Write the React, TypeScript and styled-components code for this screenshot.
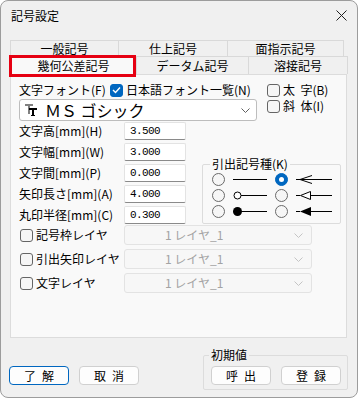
import styled, { createGlobalStyle } from 'styled-components';

const GlobalStyle = createGlobalStyle`
  html, body {
    margin: 0;
    padding: 0;
    background: #ffffff;
  }
  body {
    font-family: 'Noto Sans CJK JP', 'Noto Sans', sans-serif;
    font-size: 12px;
    color: #000;
  }
  * {
    box-sizing: border-box;
  }
`;

const Window = styled.div`
  width: 358px;
  height: 398px;
  border: 1px solid #9c9c9c;
  border-radius: 8px;
  background: #f0f0f0;
  display: flex;
  flex-direction: column;
  overflow: hidden;
`;
const TitleBar = styled.div`
  height: 29px;
  padding: 0 10px 0 10px;
  display: flex;
  align-items: center;
  justify-content: space-between;
  line-height: 12px;
`;
const Tabs = styled.div`
  margin: 10px 0 0 9px;
  display: flex;
  flex-direction: column;
`;
const TabRow = styled.div<{ $h: number }>`
  display: flex;
  height: ${(p) => p.$h}px;
`;
const Tab = styled.div<{ $w: number; $active?: boolean }>`
  width: ${(p) => p.$w}px;
  height: 100%;
  border: 1px solid #d9d9d9;
  border-bottom: none;
  margin-left: -1px;
  background: ${(p) => (p.$active ? '#f9f9f9' : '#f0f0f0')};
  display: flex;
  align-items: center;
  justify-content: center;
  line-height: 12px;
  position: relative;
  &:first-child {
    margin-left: 0;
  }
  ${(p) =>
    p.$active &&
    `
    z-index: 1;
    margin-bottom: -1px;
    height: calc(100% + 1px);
    &::after {
      content: '';
      position: absolute;
      left: -2px;
      top: -2px;
      right: 0;
      bottom: -2px;
      border: 3px solid #e60012;
      pointer-events: none;
    }
  `}
`;
const Panel = styled.div`
  margin-left: 9px;
  width: 337px;
  height: 264px;
  border: 1px solid #dcdcdc;
  background: #f9f9f9;
  padding: 0 0 0 8px;
  display: flex;
  flex-direction: column;
`;
const FontSection = styled.div`
  display: flex;
  margin-top: 7px;
`;
const FontLeft = styled.div`
  width: 238px;
  display: flex;
  flex-direction: column;
`;
const HeaderRow = styled.div`
  height: 16px;
  display: flex;
  align-items: center;
`;
const Label = styled.span<{ $w?: number }>`
  display: inline-block;
  ${(p) => (p.$w ? `width: ${p.$w}px;` : '')}
  line-height: 12px;
  white-space: nowrap;
`;
const FontCombo = styled.div`
  margin-top: 1px;
  height: 22px;
  background: #ffffff;
  border: 1px solid #bdbdbd;
  border-radius: 3px;
  display: flex;
  align-items: center;
  padding: 0 6px 0 5px;
`;
const FontName = styled.span`
  margin-left: 8px;
  font-size: 16px;
  line-height: 20px;
  flex: 1;
`;
const StyleCol = styled.div`
  margin-left: 10px;
  display: flex;
  flex-direction: column;
`;
const CheckRow = styled.div<{ $h?: number }>`
  height: ${(p) => p.$h ?? 16}px;
  display: flex;
  align-items: center;
  gap: 3px;
`;
const Box = styled.span<{ $checked?: boolean }>`
  width: 13px;
  height: 13px;
  border-radius: 3px;
  border: 1px solid ${(p) => (p.$checked ? '#0067c0' : '#656565')};
  background: ${(p) => (p.$checked ? '#0067c0' : '#f6f6f6')};
  display: inline-flex;
  align-items: center;
  justify-content: center;
  flex: none;
`;
const FieldsSection = styled.div`
  display: flex;
  margin-top: 1px;
`;
const FieldCol = styled.div`
  display: flex;
  flex-direction: column;
  gap: 3px;
`;
const FieldRow = styled.div`
  height: 18px;
  display: flex;
  align-items: center;
`;
const NumInput = styled.div`
  width: 62px;
  height: 18px;
  background: #ffffff;
  border: 1px solid #e3e3e3;
  border-bottom-color: #8a8a8a;
  border-radius: 2px;
  padding-left: 5px;
  font-family: 'Liberation Mono', monospace;
  font-size: 11px;
  letter-spacing: -0.6px;
  line-height: 16px;
`;
const GroupBox = styled.fieldset<{ $w: number }>`
  margin: 0;
  width: ${(p) => p.$w}px;
  border: 1px solid #dcdcdc;
  border-radius: 2px;
  min-width: 0;
`;
const Legend = styled.legend`
  padding: 0 2px;
  margin-left: -2px;
  line-height: 12px;
  font-size: 12px;
`;
const LeaderGroup = styled(GroupBox)`
  margin: 36px 0 0 16px;
  padding: 1px 0 1px 9px;
`;
const RadioRow = styled.div`
  height: 16px;
  display: grid;
  grid-template-columns: 13px 34px 13px 36px;
  column-gap: 8px;
  align-items: center;
`;
const Radio = styled.span<{ $on?: boolean }>`
  width: 13px;
  height: 13px;
  border-radius: 50%;
  border: 1px solid ${(p) => (p.$on ? '#0067c0' : '#6a6a6a')};
  background: ${(p) => (p.$on ? '#0067c0' : '#f6f6f6')};
  display: flex;
  align-items: center;
  justify-content: center;
  &::after {
    content: '';
    width: 5px;
    height: 5px;
    border-radius: 50%;
    background: ${(p) => (p.$on ? '#ffffff' : 'transparent')};
  }
`;
const LayerSection = styled.div`
  margin-top: 1px;
  display: flex;
  flex-direction: column;
  gap: 4px;
`;
const LayerRow = styled.div`
  height: 20px;
  display: flex;
  align-items: center;
`;
const LayerCheck = styled.div`
  width: 105px;
  padding-left: 1px;
  display: flex;
  align-items: center;
  gap: 3px;
`;
const LayerCombo = styled.div`
  width: 188px;
  height: 20px;
  border: 1px solid #e3e3e3;
  border-radius: 3px;
  background: #f7f7f7;
  color: #a3a3a3;
  display: flex;
  align-items: center;
  padding: 0 8px 0 40px;
  line-height: 12px;
  justify-content: space-between;
`;
const Footer = styled.div`
  display: flex;
  align-items: flex-start;
  padding: 0 9px 0 8px;
`;
const ButtonGroup = styled.div`
  margin-top: 28px;
  display: flex;
  gap: 10px;
`;
const Button = styled.button<{ $primary?: boolean }>`
  width: 60px;
  height: 19px;
  padding: 0;
  border: 1px solid ${(p) => (p.$primary ? '#0067c0' : '#d0d0d0')};
  border-radius: 4px;
  background: #fdfdfd;
  font-family: 'Noto Sans CJK JP', sans-serif;
  font-size: 12px;
  line-height: 12px;
  letter-spacing: 6px;
  text-indent: 6px;
  color: #000;
`;
const InitGroup = styled(GroupBox)`
  margin: 11px 0 0 auto;
  padding: 5px 5px 4px 7px;
  display: flex;
  gap: 10px;
`;

const Chevron = ({ color = '#5f5f5f' }: { color?: string }) => (
  <svg width="9" height="5" viewBox="0 0 9 5">
    <polyline points="0.5,0.5 4.5,4.5 8.5,0.5" fill="none" stroke={color} strokeWidth="1" />
  </svg>
);

const CheckMark = () => (
  <svg width="9" height="8" viewBox="0 0 9 8">
    <polyline points="1,4 3.5,6.5 8,1.5" fill="none" stroke="#fff" strokeWidth="1.4" />
  </svg>
);

const Checkbox = ({ checked }: { checked?: boolean }) => (
  <Box $checked={checked}>{checked && <CheckMark />}</Box>
);

const TTIcon = () => (
  <svg width="12" height="12" viewBox="0 0 12 12">
    <rect x="0" y="0" width="8" height="2" fill="#808080" />
    <rect x="3" y="0" width="2" height="10" fill="#808080" />
    <rect x="4" y="4" width="8" height="2" fill="#000" />
    <rect x="7" y="4" width="2" height="8" fill="#000" />
    <rect x="6" y="11" width="4" height="1" fill="#000" />
  </svg>
);

const LeaderLine = ({ kind }: { kind: 'plain' | 'open' | 'dot' }) => (
  <svg width="34" height="16" viewBox="0 0 34 16">
    {kind === 'plain' && <line x1="0" y1="8.5" x2="34" y2="8.5" stroke="#000" />}
    {kind === 'open' && (
      <>
        <circle cx="4.5" cy="8.5" r="3.5" fill="#fff" stroke="#000" />
        <line x1="8" y1="8.5" x2="34" y2="8.5" stroke="#000" />
      </>
    )}
    {kind === 'dot' && (
      <>
        <circle cx="4.5" cy="8.5" r="4.5" fill="#000" />
        <line x1="8" y1="8.5" x2="34" y2="8.5" stroke="#000" />
      </>
    )}
  </svg>
);

const ArrowLine = ({ kind }: { kind: 'open' | 'hollow' | 'solid' }) => (
  <svg width="36" height="16" viewBox="0 0 36 16">
    <line x1="0" y1="8.5" x2="4" y2="8.5" stroke="#000" />
    {kind === 'open' && (
      <>
        <line x1="4" y1="8.5" x2="36" y2="8.5" stroke="#000" />
        <polyline points="16,4.5 4,8.5 16,12.5" fill="none" stroke="#000" />
      </>
    )}
    {kind === 'hollow' && (
      <>
        <polygon points="4.5,8.5 14.5,4.5 14.5,12.5" fill="#fff" stroke="#000" />
        <line x1="14.5" y1="8.5" x2="36" y2="8.5" stroke="#000" />
      </>
    )}
    {kind === 'solid' && (
      <>
        <polygon points="4,8.5 15,4 15,13" fill="#000" />
        <line x1="15" y1="8.5" x2="36" y2="8.5" stroke="#000" />
      </>
    )}
  </svg>
);

const fields = [
  { label: '文字高[mm](H)', value: '3.500' },
  { label: '文字幅[mm](W)', value: '3.000' },
  { label: '文字間[mm](P)', value: '0.000' },
  { label: '矢印長さ[mm](A)', value: '4.000' },
  { label: '丸印半径[mm](C)', value: '0.300' },
];

const layers = ['記号枠レイヤ', '引出矢印レイヤ', '文字レイヤ'];

const App = () => {
  return (
    <>
      <GlobalStyle />
      <Window>
        <TitleBar>
          <span>記号設定</span>
          <svg width="11" height="11" viewBox="0 0 11 11">
            <line x1="0.5" y1="0.5" x2="10.5" y2="10.5" stroke="#1f1f1f" />
            <line x1="10.5" y1="0.5" x2="0.5" y2="10.5" stroke="#1f1f1f" />
          </svg>
        </TitleBar>

        <Tabs>
          <TabRow $h={16}>
            <Tab $w={109}>一般記号</Tab>
            <Tab $w={110}>仕上記号</Tab>
            <Tab $w={117}>面指示記号</Tab>
          </TabRow>
          <TabRow $h={18}>
            <Tab $w={127} $active>
              幾何公差記号
            </Tab>
            <Tab $w={113}>データム記号</Tab>
            <Tab $w={100}>溶接記号</Tab>
          </TabRow>
        </Tabs>

        <Panel>
          <FontSection>
            <FontLeft>
              <HeaderRow>
                <Label $w={91}>文字フォント(F)</Label>
                <CheckRow>
                  <Checkbox checked />
                  <Label>日本語フォント一覧(N)</Label>
                </CheckRow>
              </HeaderRow>
              <FontCombo>
                <TTIcon />
                <FontName>ＭＳ ゴシック</FontName>
                <Chevron />
              </FontCombo>
            </FontLeft>
            <StyleCol>
              <CheckRow>
                <Checkbox />
                <Label>太&nbsp;&nbsp;字(B)</Label>
              </CheckRow>
              <CheckRow>
                <Checkbox />
                <Label>斜&nbsp;&nbsp;体(I)</Label>
              </CheckRow>
            </StyleCol>
          </FontSection>

          <FieldsSection>
            <FieldCol>
              {fields.map((f) => (
                <FieldRow key={f.label}>
                  <Label $w={105}>{f.label}</Label>
                  <NumInput>{f.value}</NumInput>
                </FieldRow>
              ))}
            </FieldCol>
            <LeaderGroup $w={139}>
              <Legend>引出記号種(K)</Legend>
              <RadioRow>
                <Radio />
                <LeaderLine kind="plain" />
                <Radio $on />
                <ArrowLine kind="open" />
              </RadioRow>
              <RadioRow>
                <Radio />
                <LeaderLine kind="open" />
                <Radio />
                <ArrowLine kind="hollow" />
              </RadioRow>
              <RadioRow>
                <Radio />
                <LeaderLine kind="dot" />
                <Radio />
                <ArrowLine kind="solid" />
              </RadioRow>
            </LeaderGroup>
          </FieldsSection>

          <LayerSection>
            {layers.map((name) => (
              <LayerRow key={name}>
                <LayerCheck>
                  <Checkbox />
                  <Label>{name}</Label>
                </LayerCheck>
                <LayerCombo>
                  <span>1 レイヤ_1</span>
                  <Chevron color="#c4c4c4" />
                </LayerCombo>
              </LayerRow>
            ))}
          </LayerSection>
        </Panel>

        <Footer>
          <ButtonGroup>
            <Button $primary>了解</Button>
            <Button>取消</Button>
          </ButtonGroup>
          <InitGroup $w={145}>
            <Legend>初期値</Legend>
            <Button>呼出</Button>
            <Button>登録</Button>
          </InitGroup>
        </Footer>
      </Window>
    </>
  );
};

export default App;
